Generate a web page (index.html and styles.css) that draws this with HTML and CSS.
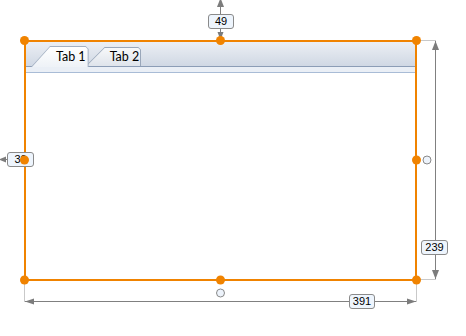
FILE: index.html
```html
<!DOCTYPE html>
<html lang="en">
<head>
    <meta charset="UTF-8">
    <title>Tab control - layout</title>
    <link rel="stylesheet" href="styles.css">
</head>
<body>
    <div class="canvas">
        <!-- Selected control -->
        <div class="frame">
            <div class="tabstrip">
                <div class="tab tab-active"><span>Tab 1</span></div>
                <div class="tab"><span>Tab 2</span></div>
            </div>
            <div class="tab-band"></div>
        </div>

        <!-- Dimension guides -->
        <svg class="guides" width="466" height="336" viewBox="0 0 466 336">
            <g stroke="#c9c9c9" stroke-width="1">
                <line x1="417" y1="40.5" x2="436" y2="40.5"/>
                <line x1="417" y1="279.5" x2="436" y2="279.5"/>
                <line x1="24.5" y1="281" x2="24.5" y2="302"/>
                <line x1="416.5" y1="281" x2="416.5" y2="302"/>
            </g>
            <g stroke="#808080" stroke-width="1">
                <line x1="220.5" y1="0" x2="220.5" y2="40"/>
                <line x1="0" y1="159.5" x2="24" y2="159.5"/>
                <line x1="435.5" y1="41" x2="435.5" y2="279"/>
                <line x1="25" y1="301.5" x2="416" y2="301.5"/>
            </g>
            <g fill="#7c7c7c">
                <polygon points="220.5,-2 217,7 224,7"/>
                <polygon points="220.5,40 217.5,32 223.5,32"/>
                <polygon points="-1,159.5 6,156.5 6,162.5"/>
                <polygon points="435.5,41 432,50 439,50"/>
                <polygon points="435.5,279 432,270 439,270"/>
                <polygon points="25,301.5 34,298.5 34,304.5"/>
                <polygon points="416,301.5 407,298.5 407,304.5"/>
            </g>
            <g fill="#edf3fb" stroke="#8a8a8a" stroke-width="1">
                <circle cx="427" cy="160" r="4"/>
                <circle cx="220.5" cy="293" r="4"/>
            </g>
        </svg>

        <div class="dim-label dim-top">49</div>
        <div class="dim-label dim-left">30</div>
        <div class="dim-label dim-right">239</div>
        <div class="dim-label dim-bottom">391</div>

        <!-- Resize handles -->
        <svg class="handles" width="466" height="336" viewBox="0 0 466 336">
            <g fill="#f08300">
                <circle cx="24.5" cy="40.5" r="4.5"/>
                <circle cx="220.5" cy="40.5" r="4.5"/>
                <circle cx="416.5" cy="40.5" r="4.5"/>
                <circle cx="24.5" cy="160" r="4.5"/>
                <circle cx="416.5" cy="160" r="4.5"/>
                <circle cx="24.5" cy="280" r="4.5"/>
                <circle cx="220.5" cy="280" r="4.5"/>
                <circle cx="416.5" cy="280" r="4.5"/>
            </g>
        </svg>
    </div>
</body>
</html>
```

FILE: styles.css
```css
/* Page */
body {
    margin: 0;
    background: #ffffff;
    font-family: "Lato", "Liberation Sans", sans-serif;
}

.canvas {
    position: relative;
    width: 466px;
    height: 336px;
    overflow: hidden;
}

/* Selected tab control */
.frame {
    position: absolute;
    left: 24px;
    top: 40px;
    width: 393px;
    height: 241px;
    box-sizing: border-box;
    border: 2px solid #f08300;
    background: #ffffff;
}

.tabstrip {
    display: flex;
    align-items: flex-end;
    height: 24px;
    padding-left: 5px;
    background: linear-gradient(#eceff4, #d0d8e4);
    border-bottom: 1px solid #8c9db6;
}

.tab {
    position: relative;
    z-index: 1;
    height: 19px;
    margin-left: -3px;
    padding: 0 2px 0 24px;
    display: flex;
    align-items: center;
    font-size: 12.5px;
    color: #000000;
    background: #9aa7ba;
    clip-path: polygon(0 100%, 19px 0, calc(100% - 3px) 0, 100% 3px, 100% 100%);
}

.tab::before {
    content: "";
    position: absolute;
    top: 1px;
    left: 1px;
    right: 1px;
    bottom: 0;
    background: linear-gradient(#f7f8fa, #dfe4eb);
    clip-path: polygon(0 100%, 18px 0, calc(100% - 2px) 0, 100% 2px, 100% 100%);
}

.tab span {
    position: relative;
}

.tab-active {
    z-index: 2;
    height: 21px;
    margin-left: 0;
    margin-bottom: -1px;
    padding: 0 3px 0 25px;
    background: #a3b0c2;
}

.tab-active::before {
    background: linear-gradient(#ffffff, #eef2f7);
}

.tab-band {
    height: 5px;
    background: #eaeff6;
    border-bottom: 1px solid #a9bcd6;
}

/* Guides and handles */
.guides,
.handles {
    position: absolute;
    left: 0;
    top: 0;
    overflow: visible;
}

.dim-label {
    position: absolute;
    width: 26px;
    height: 15px;
    box-sizing: border-box;
    border: 1px solid #8a8a8a;
    border-radius: 3px;
    background: #eef5fd;
    font-family: "Liberation Sans", sans-serif;
    font-size: 11px;
    line-height: 13px;
    text-align: center;
    color: #000000;
}

.dim-top {
    left: 208px;
    top: 14px;
}

.dim-left {
    left: 7px;
    top: 152px;
    width: 27px;
}

.dim-right {
    left: 421px;
    top: 240px;
    width: 27px;
}

.dim-bottom {
    left: 349px;
    top: 294px;
}
```
